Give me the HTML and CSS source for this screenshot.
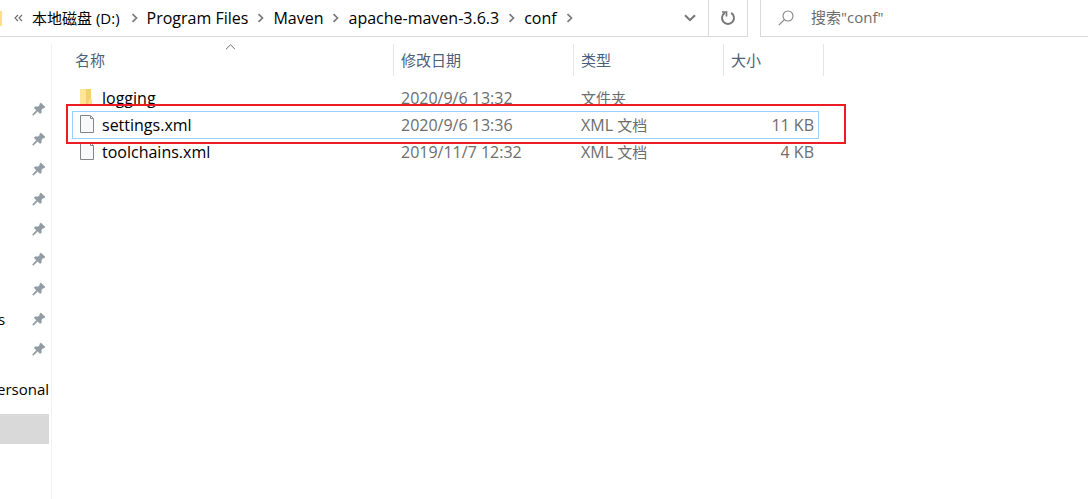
FILE: index.html
```html
<!DOCTYPE html>
<html lang="zh-CN">
<head>
<meta charset="utf-8">
<title>conf</title>
<link rel="stylesheet" href="styles.css">
</head>
<body>
<svg class="defs" aria-hidden="true">
  <symbol id="chev" viewBox="0 0 8 10"><path d="M1.5 1.2 5.5 5 1.5 8.8" fill="none" stroke="#7a7a7a" stroke-width="1.7"/></symbol>
  <symbol id="pin" viewBox="0 0 14 14"><path d="M8.8 1 13 5.1 11.8 6 11 5.8 9.2 8 9.2 10.6 8.2 11.6 5.6 9.2 1.4 13.2 0.6 12.6 4.6 8.2 2.2 5.8 3.2 4.8 6 4.9 8.1 3 7.8 2Z" fill="#929ca4" stroke="#929ca4" stroke-width=".7"/></symbol>
  <symbol id="file" viewBox="0 0 16 20"><path d="M1.5.5H11.5L14.5 3.5V17.5H1.5Z" fill="#f7f9fa" stroke="#858585"/><path d="M11.5 1V3.5H14" fill="#fff" stroke="#858585"/></symbol>
</svg>
<div class="explorer">
  <header class="toolbar">
    <nav class="address" aria-label="路径">
      <span class="folder-edge"></span>
      <button class="crumb more" aria-label="更多">
        <svg class="more-icon" viewBox="0 0 9 8"><path d="M4 1 1 4 4 7M8 1 5 4 8 7" fill="none" stroke="#666" stroke-width="1.1"/></svg>
      </button>
      <button class="crumb drive">本地磁盘 (D:)</button><svg class="chev"><use href="#chev"/></svg>
      <button class="crumb">Program Files</button><svg class="chev"><use href="#chev"/></svg>
      <button class="crumb">Maven</button><svg class="chev"><use href="#chev"/></svg>
      <button class="crumb">apache-maven-3.6.3</button><svg class="chev"><use href="#chev"/></svg>
      <button class="crumb">conf</button><svg class="chev"><use href="#chev"/></svg>
      <button class="history" aria-label="历史">
        <svg width="12" height="8" viewBox="0 0 12 8"><path d="M1 1.2 6 6.2 11 1.2" fill="none" stroke="#767676" stroke-width="2"/></svg>
      </button>
      <button class="refresh" aria-label="刷新">
        <svg width="16" height="16" viewBox="0 0 16 16"><path d="M11.2 2.9A6 6 0 1 1 4.8 2.9" fill="none" stroke="#767676" stroke-width="1.9"/><path d="M2 2H6.5V6.5" fill="none" stroke="#767676" stroke-width="1.7"/></svg>
      </button>
    </nav>
    <label class="search">
      <svg width="16" height="16" viewBox="0 0 16 16"><circle cx="10" cy="6" r="5" fill="none" stroke="#858585" stroke-width="1.1"/><path d="M6.4 9.6.8 15.2" stroke="#858585" stroke-width="1.2"/></svg>
      <input type="text" placeholder='搜索"conf"' aria-label="搜索">
    </label>
  </header>
  <div class="body">
    <aside class="sidebar">
      <ul class="pins">
        <li><svg class="pin"><use href="#pin"/></svg></li>
        <li><svg class="pin"><use href="#pin"/></svg></li>
        <li><svg class="pin"><use href="#pin"/></svg></li>
        <li><svg class="pin"><use href="#pin"/></svg></li>
        <li><svg class="pin"><use href="#pin"/></svg></li>
        <li><svg class="pin"><use href="#pin"/></svg></li>
        <li><svg class="pin"><use href="#pin"/></svg></li>
        <li><span class="pin-label">s</span><svg class="pin"><use href="#pin"/></svg></li>
        <li><svg class="pin"><use href="#pin"/></svg></li>
      </ul>
      <div class="place">ersonal</div>
      <div class="place current"></div>
    </aside>
    <main class="content">
      <table class="files">
        <colgroup><col class="c-name"><col class="c-date"><col class="c-type"><col class="c-size"></colgroup>
        <thead>
          <tr>
            <th>名称<svg class="sort" viewBox="0 0 11 6"><path d="M1 5.2 5.5.8 10 5.2" fill="none" stroke="#6d6d6d"/></svg></th>
            <th>修改日期</th><th>类型</th><th>大小</th>
          </tr>
        </thead>
        <tbody>
          <tr>
            <td class="name"><div class="entry"><svg class="icon" viewBox="0 0 16 20"><path d="M1 1H8V17H1Z" fill="#ffe08a"/><path d="M1 1 7 2V17H1Z" fill="#ffe597"/><path d="M7 1H12V16H7Z" fill="#f5cf70"/><path d="M10 11H13V16H9Z" fill="#ffe08a"/></svg>logging</div></td>
            <td>2020/9/6 13:32</td><td class="kind">文件夹</td><td class="size"></td>
          </tr>
          <tr class="focused">
            <td class="name"><div class="entry"><svg class="icon"><use href="#file"/></svg>settings.xml</div></td>
            <td>2020/9/6 13:36</td><td>XML <span class="kind">文档</span></td><td class="size">11 KB</td>
          </tr>
          <tr>
            <td class="name"><div class="entry"><svg class="icon"><use href="#file"/></svg>toolchains.xml</div></td>
            <td>2019/11/7 12:32</td><td>XML <span class="kind">文档</span></td><td class="size">4 KB</td>
          </tr>
        </tbody>
      </table>
    </main>
  </div>
</div>
</body>
</html>
```

FILE: styles.css
```css
* { box-sizing: border-box; }
body {
  margin: 0;
  background: #fff;
  color: #000;
  font: 15px/20px "Open Sans", "Noto Sans CJK SC", sans-serif;
}
button, input {
  font: inherit;
  color: inherit;
  border: 0;
  padding: 0;
  background: none;
}
.defs { position: absolute; width: 0; height: 0; }
.explorer {
  display: flex;
  flex-direction: column;
  min-height: 100vh;
  overflow: hidden;
}
.toolbar { display: flex; gap: 12px; }
.address {
  flex: 0 1 748px;
  height: 37px;
  display: flex;
  align-items: center;
  border: solid #d9d9d9;
  border-width: 0 1px 1px 0;
  white-space: nowrap;
}
.folder-edge {
  width: 2px;
  height: 15px;
  background: #ffdf85;
  margin-right: 12px;
}
.crumb { height: 36px; padding-bottom: 1px; font-size: 16px; }
.drive { font-size: 15px; padding-right: 2px; }
.more { display: flex; align-items: center; margin-right: 9px; }
.more-icon { width: 9px; height: 8px; }
.chev { width: 8px; height: 10px; flex: none; margin: 0 8px 0 9px; }
.history { margin-left: auto; margin-right: 12px; display: flex; }
.refresh {
  width: 39px;
  align-self: stretch;
  display: flex;
  align-items: center;
  justify-content: center;
  border-left: 1px solid #d9d9d9;
}
.search {
  flex: 1;
  display: flex;
  align-items: center;
  gap: 17px;
  padding-left: 17px;
  border: solid #d9d9d9;
  border-width: 0 0 1px 1px;
}
.search input { flex: 1; min-width: 0; outline: 0; padding-bottom: 2px; }
.search input::placeholder { color: #6d6d6d; opacity: 1; }
.body { flex: 1; display: flex; padding-top: 7px; }
.sidebar {
  width: 52px;
  flex: none;
  padding: 50px 2px 0 0;
  border-right: 1px solid #f2f2f2;
}
.pins { list-style: none; margin: 0 0 10px; padding: 0; }
.pins li {
  height: 30px;
  display: flex;
  align-items: center;
  justify-content: flex-end;
  padding-right: 3px;
}
.pin { width: 14px; height: 14px; }
.pin-label { margin-right: auto; margin-left: -2px; }
.place {
  height: 30px;
  line-height: 30px;
  display: flex;
  justify-content: flex-end;
  margin-bottom: 10px;
}
.current { background: #d9d9d9; }
.content { flex: 1; padding-left: 20px; }
.files {
  width: 752px;
  table-layout: fixed;
  border-collapse: separate;
  border-spacing: 0;
}
.c-name { width: 322px; }
.c-date { width: 180px; }
.c-type { width: 150px; }
.c-size { width: 100px; }
th {
  position: relative;
  height: 32px;
  padding: 0 0 0 7px;
  font-weight: 400;
  text-align: left;
  color: #4c607a;
  border-right: 1px solid #e5e5e5;
}
th:first-child { padding-left: 3px; }
.sort {
  position: absolute;
  top: 0;
  left: 50%;
  width: 11px;
  height: 6px;
  margin-left: -8px;
}
tbody::before { content: ""; display: block; height: 8px; }
td {
  height: 27px;
  padding: 0 0 0 7px;
  font-size: 16px;
  color: #6d6d6d;
  white-space: nowrap;
}
td.name { color: #000; }
.kind { font-size: 15px; }
.entry { display: flex; align-items: center; gap: 7px; }
.icon { width: 16px; height: 20px; }
td.size { text-align: right; padding-right: 10px; }
.focused { position: relative; }
.focused .name::before, .focused .name::after { content: ""; position: absolute; }
.focused .name::before {
  inset: 0 5px -1px 0;
  border: 1px solid #99d1ff;
}
.focused .name::after {
  inset: -7px -22px -6px -6px;
  border: 2px solid #ed1c24;
}
```
